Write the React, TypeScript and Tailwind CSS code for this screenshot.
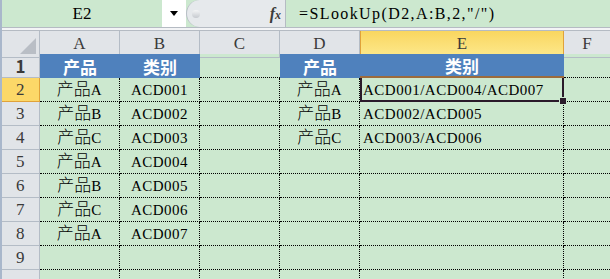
const cols = "grid grid-cols-[38px_80px_80px_80px_80px_204px_1fr]"
const serif = "font-['Liberation_Serif','Noto_Sans_CJK_SC',serif]"
const dot = "border-r border-b border-dotted border-black"

function Cjk({ children }: { children: React.ReactNode }) {
  return <span className="font-['Noto_Sans_CJK_SC',sans-serif] text-[17px] font-light tracking-normal">{children}</span>
}

const left = [
  ["A", "ACD001"],
  ["B", "ACD002"],
  ["C", "ACD003"],
  ["A", "ACD004"],
  ["B", "ACD005"],
  ["C", "ACD006"],
  ["A", "ACD007"],
]

const right: Record<number, [string, string]> = {
  0: ["A", "ACD001/ACD004/ACD007"],
  1: ["B", "ACD002/ACD005"],
  2: ["C", "ACD003/ACD006"],
}

function RowHead({ n, active }: { n?: number; active?: boolean }) {
  return (
    <div
      className={
        "flex items-center justify-center border-r border-b text-[17px] text-[#3a3a3a] " +
        (active ? "bg-[#fcd868] border-[#e0a23a]" : "bg-[#e1e4e8] border-[#b4bcc6]")
      }
    >
      {n}
    </div>
  )
}

export default function App() {
  const rows = Array.from({ length: 9 }, (_, i) => i)
  return (
    <div className={"flex h-[279px] w-[610px] flex-col overflow-hidden border-l-2 border-[#a9b7cb] bg-[#cce8cf] " + serif}>
      {/* formula bar */}
      <div className="flex h-[28px] shrink-0 border-b border-[#b5bbc3]">
        <div className="flex w-[160px] items-center justify-center text-[17px] text-black">E2</div>
        <div className="flex w-[24px] items-center justify-center bg-white">
          <div className="h-0 w-0 border-x-[4px] border-t-[5px] border-x-transparent border-t-black" />
        </div>
        <div className="flex w-[99px] items-center justify-between rounded-l-full border-l border-[#b9bfc7] bg-[#e6e9ec] pl-[5px] pr-[4px]">
          <div className="h-[8px] w-[8px] rounded-full bg-gradient-to-b from-[#f4f5f6] to-[#c6cacf]" />
          <span className="text-[16px] italic font-bold text-[#3b3b3b]">
            f<span className="text-[12px]">x</span>
          </span>
        </div>
        <div className="flex flex-1 items-center border-l border-[#b5bbc3] pl-[13px] text-[16px] tracking-[1.4px] text-black">
          =SLookUp(D2,A:B,2,"/")
        </div>
      </div>
      <div className="h-[3px] shrink-0 border-b border-[#b5bbc3] bg-[#f3f4f6]" />

      {/* column headers */}
      <div className={cols + " h-[23px] shrink-0 bg-[#e1e4e8] text-[17px] text-[#3a3a3a]"}>
        <div className="relative border-r border-b border-[#b4bcc6]">
          <svg className="absolute right-[3px] bottom-[3px]" width="16" height="16" viewBox="0 0 16 16">
            <polygon points="16,0 16,16 0,16" fill="#b9bec5" />
          </svg>
        </div>
        {["A", "B", "C", "D"].map((c) => (
          <div key={c} className="flex items-center justify-center border-r border-b border-[#b4bcc6]">
            {c}
          </div>
        ))}
        <div className="flex items-center justify-center border-x border-b border-[#e0a23a] bg-gradient-to-b from-[#f9d65f] to-[#fde98c]">
          E
        </div>
        <div className="flex items-center justify-center border-b border-[#b4bcc6]">F</div>
      </div>

      {/* row 1 */}
      <div className={cols + " h-[24px] shrink-0 font-['Noto_Sans_CJK_SC',sans-serif] text-[17px] font-bold leading-none text-white"}>
        <RowHead n={1} />
        <div className="flex items-center justify-center bg-[#4f81bd]">产品</div>
        <div className="flex items-center justify-center bg-[#4f81bd]">类别</div>
        <div className="border-b border-dotted border-black" />
        <div className="flex items-center justify-center bg-[#4f81bd]">产品</div>
        <div className="flex items-center justify-center border-b-2 border-[#9c6b3c] bg-[#4f81bd]">类别</div>
        <div className="border-b border-dotted border-black" />
      </div>

      {/* data rows */}
      {rows.map((i) => {
        const l = left[i]
        const r = right[i]
        return (
          <div key={i} className={cols + " h-[24px] shrink-0 text-[15px] leading-none tracking-[0.5px] text-black"}>
            <RowHead n={i < 8 ? i + 2 : undefined} active={i === 0} />
            <div className={dot + " flex items-end justify-center pb-[3px]"}>
              {l && (
                <span>
                  <Cjk>产品</Cjk>
                  {l[0]}
                </span>
              )}
            </div>
            <div className={dot + " flex items-end justify-center pb-[3px]"}>{l && l[1]}</div>
            <div className={dot} />
            <div className={dot + " flex items-end justify-center pb-[3px]"}>
              {r && (
                <span>
                  <Cjk>产品</Cjk>
                  {r[0]}
                </span>
              )}
            </div>
            {i === 0 ? (
              <div className="relative flex items-end border-2 border-t-0 border-[#2a1a2a] pb-[2px] pl-[1px]">
                {r[1]}
                <div className="absolute -right-[4px] -bottom-[4px] h-[6px] w-[6px] bg-[#2a1a2a] outline outline-1 outline-[#cce8cf]" />
              </div>
            ) : (
              <div className={dot + " flex items-end pb-[3px] pl-[3px]"}>{r && r[1]}</div>
            )}
            <div className="border-b border-dotted border-black" />
          </div>
        )
      })}
    </div>
  )
}
